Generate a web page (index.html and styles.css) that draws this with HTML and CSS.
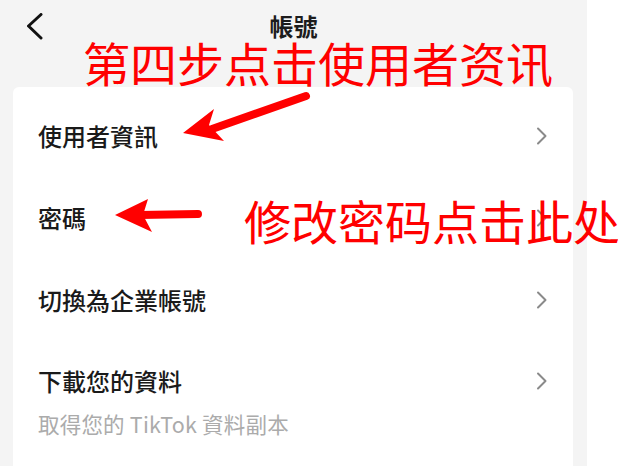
FILE: index.html
```html
<!DOCTYPE html>
<html lang="zh-Hant">
<head>
<meta charset="utf-8">
<title>帳號</title>
<link rel="stylesheet" href="styles.css">
</head>
<body>
<div class="page">
  <div class="main">
    <header class="header">
      <div class="back">
        <svg width="18" height="30" viewBox="0 0 18 30"><polyline points="14,1.5 1.5,13 14,25" fill="none" stroke="#111" stroke-width="3" stroke-linecap="round" stroke-linejoin="round"/></svg>
      </div>
      <div class="title">帳號</div>
      <div></div>
    </header>
    <section class="card">
      <div class="row">
        <span class="label">使用者資訊</span>
        <svg class="chev" width="12" height="18" viewBox="0 0 12 18"><polyline points="2,1.5 9.5,9 2,16.5" fill="none" stroke="#8a8a8a" stroke-width="2" stroke-linecap="round" stroke-linejoin="round"/></svg>
      </div>
      <div class="row">
        <span class="label">密碼</span>
        <svg class="chev" width="12" height="18" viewBox="0 0 12 18"><polyline points="2,1.5 9.5,9 2,16.5" fill="none" stroke="#8a8a8a" stroke-width="2" stroke-linecap="round" stroke-linejoin="round"/></svg>
      </div>
      <div class="row">
        <span class="label">切換為企業帳號</span>
        <svg class="chev" width="12" height="18" viewBox="0 0 12 18"><polyline points="2,1.5 9.5,9 2,16.5" fill="none" stroke="#8a8a8a" stroke-width="2" stroke-linecap="round" stroke-linejoin="round"/></svg>
      </div>
      <div class="row-tall">
        <div class="row-head">
          <span class="label">下載您的資料</span>
          <svg class="chev" width="12" height="18" viewBox="0 0 12 18"><polyline points="2,1.5 9.5,9 2,16.5" fill="none" stroke="#8a8a8a" stroke-width="2" stroke-linecap="round" stroke-linejoin="round"/></svg>
        </div>
        <div class="sub">取得您的 TikTok 資料副本</div>
      </div>
    </section>
  </div>
  <div class="edge"></div>

  <div class="note note-1">第四步点击使用者资讯</div>
  <div class="note note-2">修改密码点击此处</div>
  <svg class="arrows" width="618" height="466" viewBox="0 0 618 466">
    <line x1="306" y1="96" x2="212" y2="129" stroke="#ff0000" stroke-width="8" stroke-linecap="round"/>
    <polygon points="183,133 214,109 209,125 224,141" fill="#ff0000"/>
    <line x1="198" y1="214" x2="140" y2="215" stroke="#ff0000" stroke-width="8" stroke-linecap="round"/>
    <polygon points="115,215 148,199 143,215 152,232" fill="#ff0000"/>
  </svg>
</div>
</body>
</html>
```
FILE: styles.css
```css
* { box-sizing: border-box; }
html, body { margin: 0; padding: 0; }
body {
  width: 618px;
  height: 466px;
  overflow: hidden;
  background: #ffffff;
  font-family: "Noto Sans CJK TC", "Noto Sans", sans-serif;
}
.page {
  position: relative;
  display: flex;
  width: 618px;
  height: 466px;
}
.main {
  width: 587px;
  height: 466px;
  background: #f4f4f4;
  display: flex;
  flex-direction: column;
}
.edge {
  flex: 1;
  background: #ffffff;
}
.header {
  height: 87px;
  display: grid;
  grid-template-columns: 1fr auto 1fr;
  align-items: start;
}
.back {
  padding: 13px 0 0 27px;
  line-height: 0;
}
.title {
  padding-top: 12px;
  font-size: 24px;
  line-height: 28px;
  font-weight: 700;
  color: #1c1c1c;
}
.card {
  flex: 1;
  margin-left: 13px;
  width: 560px;
  background: #ffffff;
  border-radius: 6px 6px 0 0;
  padding: 8px 25px 0 25px;
}
.row {
  height: 82px;
  display: flex;
  align-items: center;
  justify-content: space-between;
}
.row-tall {
  padding-top: 23px;
}
.row-head {
  height: 34px;
  display: flex;
  align-items: center;
  justify-content: space-between;
}
.label {
  font-size: 24px;
  line-height: 34px;
  font-weight: 500;
  color: #1a1a1a;
}
.chev {
  display: block;
  margin-right: 0;
}
.sub {
  margin-top: 11px;
  font-size: 21.5px;
  line-height: 30px;
  color: #ababab;
  letter-spacing: 0.2px;
}
.note {
  position: absolute;
  font-family: "Noto Sans CJK SC", "Noto Sans", sans-serif;
  color: #ff0000;
  font-size: 47px;
  line-height: 1;
  white-space: nowrap;
  font-weight: 400;
}
.note-1 { left: 83px; top: 38px; }
.note-2 { left: 244px; top: 196px; }
.arrows {
  position: absolute;
  left: 0;
  top: 0;
  pointer-events: none;
}
```
